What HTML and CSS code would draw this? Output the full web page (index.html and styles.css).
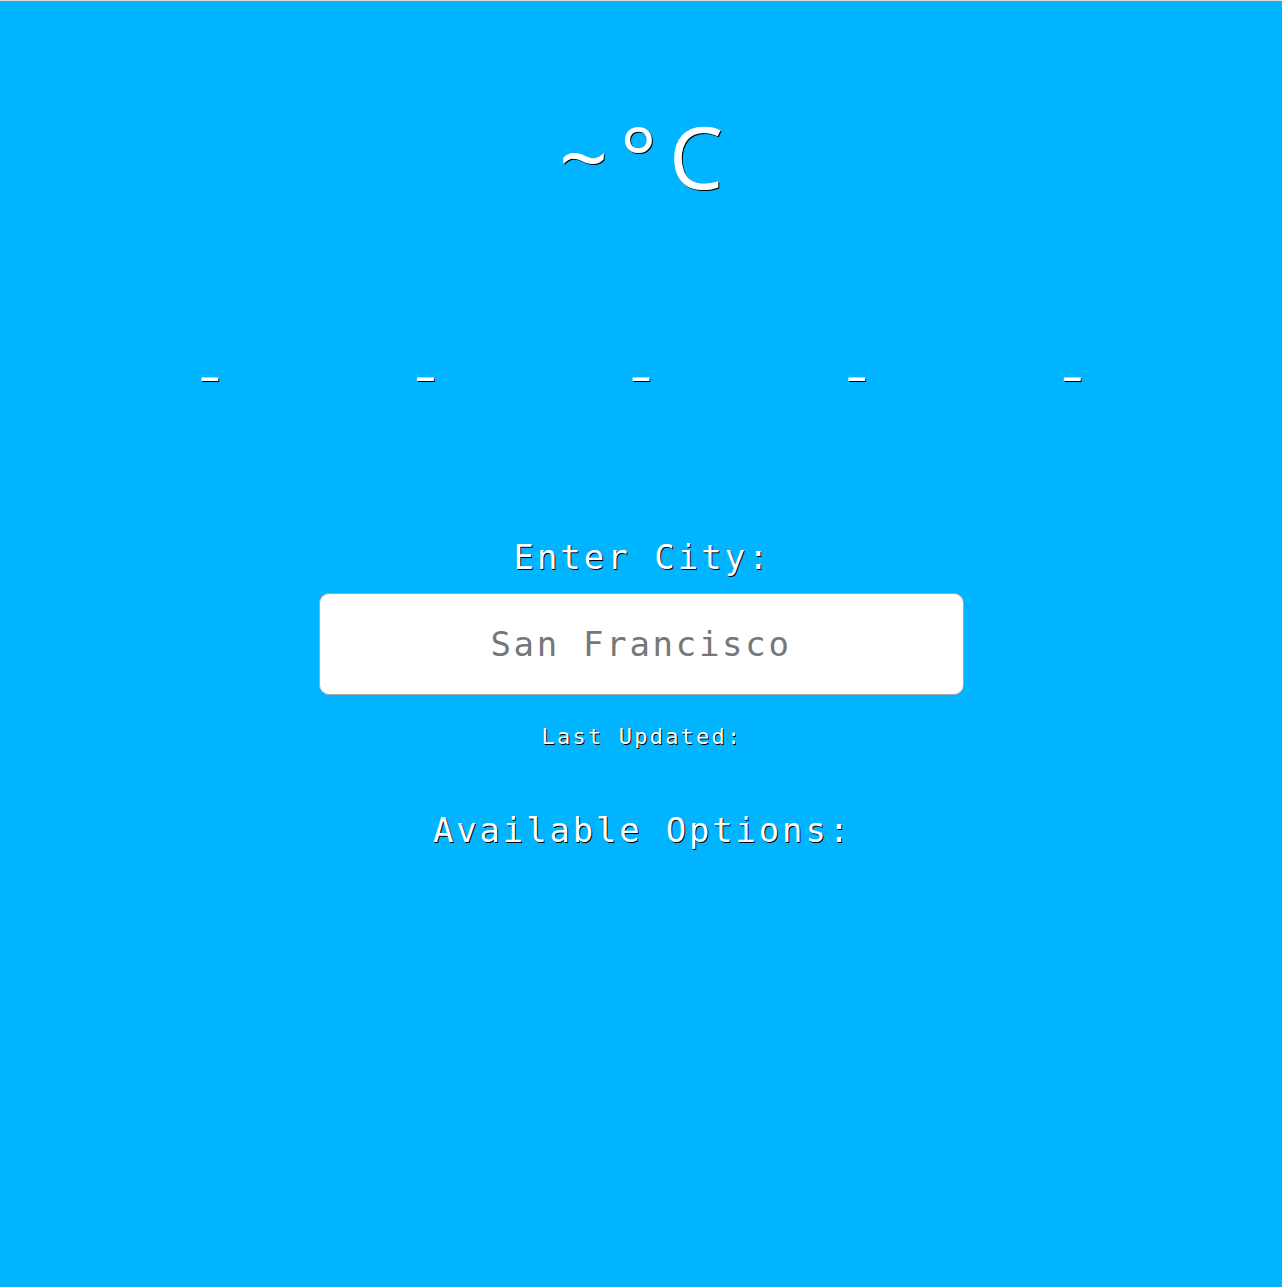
FILE: index.html
```html
<!DOCTYPE html>
<html lang="en">
<head>
<meta charset="utf-8">
<title>Weather</title>
<link rel="stylesheet" href="styles.css">
</head>
<body>
<main class="app">
  <h1 class="temp">~°C</h1>
  <div class="forecast">
    <div class="day">–</div>
    <div class="day">–</div>
    <div class="day">–</div>
    <div class="day">–</div>
    <div class="day">–</div>
  </div>
  <label class="city-label" for="city">Enter City:</label>
  <input class="city-input" id="city" type="text" placeholder="San Francisco">
  <p class="updated">Last Updated:</p>
  <h2 class="options">Available Options:</h2>
</main>
</body>
</html>
```
FILE: styles.css
```css
html, body {
  margin: 0;
  padding: 0;
}
body {
  background: #00b4ff;
  border-top: 1px solid #dcdcdc;
  min-height: 1286px;
  color: #fff;
  font-family: "DejaVu Sans Mono", "Liberation Mono", monospace;
  text-shadow: 1px 1px 0 #000;
}
.app {
  display: flex;
  flex-direction: column;
  align-items: center;
}
.temp {
  margin: 95px 0 0;
  font-family: "Open Sans", "Noto Sans", sans-serif;
  font-weight: 400;
  font-size: 86px;
  line-height: 120px;
  letter-spacing: 12px;
  text-indent: 12px;
}
.forecast {
  margin-top: 142px;
  width: 1078px;
  display: grid;
  grid-template-columns: repeat(5, 1fr);
}
.day {
  text-align: center;
  font-size: 28px;
  font-weight: bold;
  line-height: 40px;
}
.city-label {
  margin-top: 137px;
  font-size: 34px;
  letter-spacing: 3px;
  text-indent: 3px;
  line-height: 44px;
}
.city-input {
  margin-top: 14px;
  box-sizing: border-box;
  width: 645px;
  height: 102px;
  border: 1px solid #a8a8a8;
  border-radius: 10px;
  background: #fff;
  text-align: center;
  font-family: "DejaVu Sans Mono", "Liberation Mono", monospace;
  font-size: 34px;
  letter-spacing: 2.7px;
  color: #333;
  text-shadow: none;
  outline: none;
}
.city-input::placeholder {
  color: #777;
}
.updated {
  margin: 27px 0 0;
  font-size: 22px;
  letter-spacing: 2.2px;
  text-indent: 2px;
  line-height: 30px;
}
.options {
  margin: 56px 0 0;
  font-size: 34px;
  font-weight: 400;
  letter-spacing: 2.8px;
  text-indent: 3px;
  line-height: 44px;
}
```
